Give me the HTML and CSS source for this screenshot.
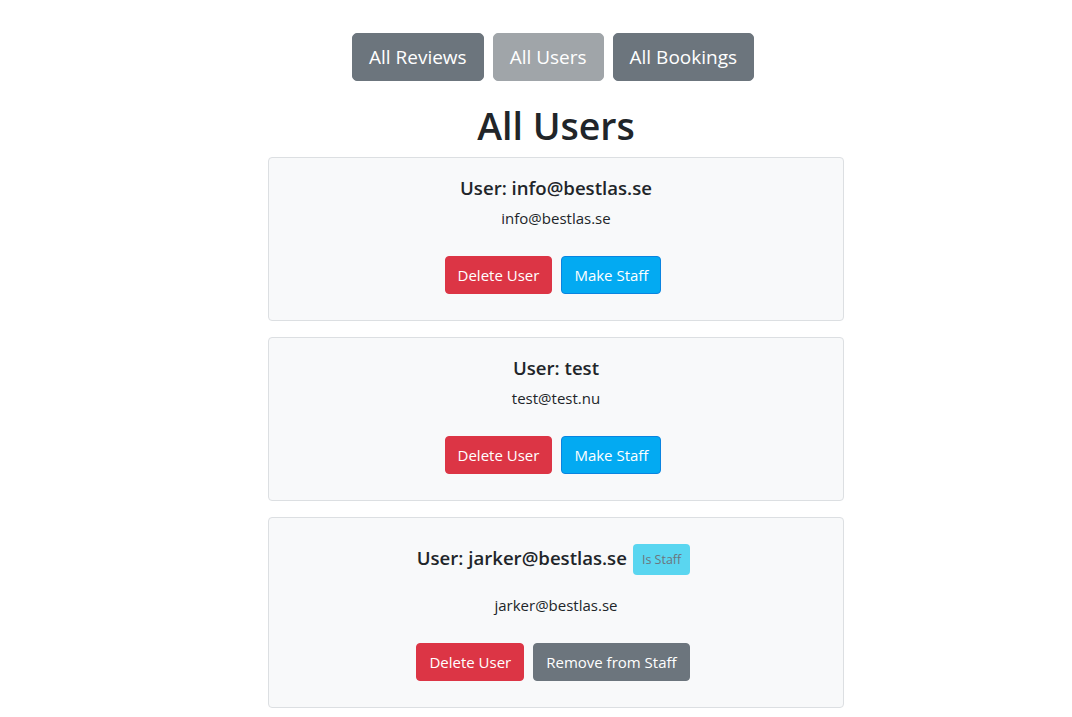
FILE: index.html
```html
<!DOCTYPE html>
<html lang="en">
<head>
<meta charset="utf-8">
<title>All Users</title>
<link rel="stylesheet" href="styles.css">
</head>
<body>
<div class="page">
  <nav class="tabs">
    <button class="btn btn-lg btn-secondary">All Reviews</button>
    <button class="btn btn-lg btn-secondary active">All Users</button>
    <button class="btn btn-lg btn-secondary">All Bookings</button>
  </nav>
  <h1 class="title">All Users</h1>
  <div class="list">
    <div class="card">
      <div class="card-title"><h5>User: info@bestlas.se</h5></div>
      <p class="email">info@bestlas.se</p>
      <div class="actions">
        <button class="btn btn-danger">Delete User</button>
        <button class="btn btn-info">Make Staff</button>
      </div>
    </div>
    <div class="card">
      <div class="card-title"><h5>User: test</h5></div>
      <p class="email">test@test.nu</p>
      <div class="actions">
        <button class="btn btn-danger">Delete User</button>
        <button class="btn btn-info">Make Staff</button>
      </div>
    </div>
    <div class="card">
      <div class="card-title staff"><h5>User: jarker@bestlas.se</h5><span class="badge">Is Staff</span></div>
      <p class="email">jarker@bestlas.se</p>
      <div class="actions">
        <button class="btn btn-danger">Delete User</button>
        <button class="btn btn-secondary">Remove from Staff</button>
      </div>
    </div>
  </div>
</div>
</body>
</html>
```
FILE: styles.css
```css
* { box-sizing: border-box; }
html, body { margin: 0; padding: 0; background: #fff; }
body {
  font-family: "Open Sans", "Noto Sans", sans-serif;
  color: #212529;
  font-size: 16px;
  line-height: 1.5;
}
.page {
  width: 576px;
  margin-left: 268px;
  padding-top: 33px;
}
.tabs {
  display: flex;
  justify-content: center;
  gap: 9px;
  padding-right: 6px;
}
.btn {
  font-family: inherit;
  font-size: 15px;
  line-height: 24px;
  padding: 6px 12px;
  border: 1px solid transparent;
  border-radius: 4px;
  color: #fff;
  cursor: pointer;
}
.btn-lg {
  font-size: 19px;
  line-height: 30px;
  padding: 8px 16px;
  border-radius: 5px;
}
.btn-secondary { background: #6c757d; border-color: #6c757d; }
.btn-secondary.active { background: #a0a5a9; border-color: #a0a5a9; }
.btn-danger { background: #dc3545; border-color: #dc3545; }
.btn-info { background: #03aaf2; border-color: #0a84e0; }
.title {
  margin: 21px 0 0;
  text-align: center;
  font-size: 37.5px;
  line-height: 48px;
  font-weight: 600;
}
.list {
  display: flex;
  flex-direction: column;
  gap: 16px;
  margin-top: 7px;
}
.card {
  background: #f8f9fa;
  border: 1px solid #dcdfe2;
  border-radius: 4px;
  padding: 18px 16px 26px;
  text-align: center;
}
.card-title {
  display: flex;
  justify-content: center;
  align-items: center;
  gap: 6px;
}
.card-title.staff { padding-right: 5px; }
.card-title h5 {
  margin: 0;
  font-size: 18.6px;
  line-height: 24px;
  font-weight: 600;
}
.card-title.staff h5 { padding-bottom: 7px; }
.badge {
  display: inline-block;
  background: #5ad6f0;
  color: #6c757d;
  font-size: 12.5px;
  line-height: 19px;
  padding: 6px 9px;
  border-radius: 4px;
  margin: 8px 0 12px;
}
.email {
  margin: 6px 0 0;
  font-size: 15px;
  line-height: 24px;
}
.actions {
  margin-top: 26px;
  display: flex;
  justify-content: center;
  gap: 9px;
  padding-right: 6px;
}
```
